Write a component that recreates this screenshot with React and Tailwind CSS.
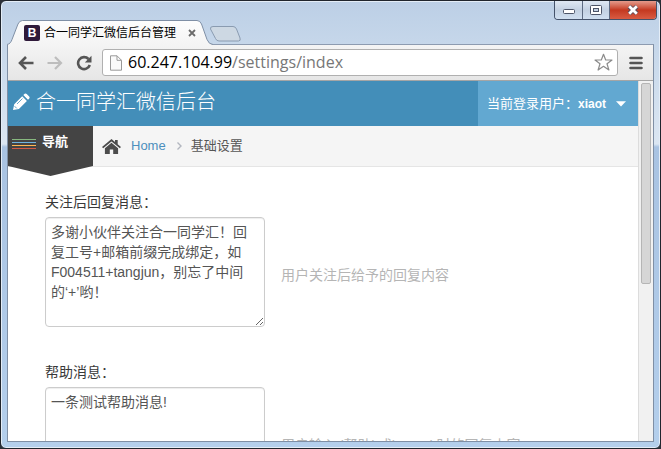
import React from 'react';

const frameText = "font-['Liberation_Sans','Noto_Sans_CJK_SC',sans-serif]";

function WindowButtons() {
  return (
    <div className="-mr-[3px] flex h-[19px] overflow-hidden rounded-b border border-t-0 border-[#44526a]">
      <button aria-label="最小化" className="flex w-[28px] items-center justify-center border-r border-[#5d6b82] bg-linear-to-b from-[#dfe8f3] via-[#c3d1e2] to-[#d0dff0]">
        <svg width="14" height="12" viewBox="0 0 14 12"><rect x="1.5" y="5.5" width="11" height="4" rx="1" fill="#fff" stroke="#4d5568" /></svg>
      </button>
      <button aria-label="最大化" className="flex w-[27px] items-center justify-center border-r border-[#5d6b82] bg-linear-to-b from-[#dfe8f3] via-[#c3d1e2] to-[#d0dff0]">
        <svg width="12" height="12" viewBox="0 0 12 12">
          <rect x="0.5" y="1.5" width="11" height="9" rx="1" fill="#fff" stroke="#4d5568" />
          <rect x="3.5" y="4.5" width="5" height="3" fill="#c3d1e2" stroke="#4d5568" />
        </svg>
      </button>
      <button aria-label="关闭" className="flex w-[46px] items-center justify-center bg-linear-to-b from-[#e39a8b] via-[#c4381f] to-[#d95b42]">
        <svg width="14" height="12" viewBox="0 0 14 12">
          <path d="M3 2.5 11 9.5M11 2.5 3 9.5" stroke="#5b4b58" strokeWidth="4.6" />
          <path d="M3.2 2.2 10.8 9.8M10.8 2.2 3.2 9.8" stroke="#fff" strokeWidth="2.8" />
        </svg>
      </button>
    </div>
  );
}

function TabStrip() {
  return (
    <div className="flex h-6 shrink-0 items-end">
      <div className="relative -mb-px flex h-[25px] w-[206px] items-center pr-[17px] pl-[17px]">
        <svg className="absolute inset-0" width="206" height="25" viewBox="0 0 206 25">
          <defs>
            <linearGradient id="tab" x1="0" y1="0" x2="0" y2="1">
              <stop offset="0" stopColor="#fdfdfd" />
              <stop offset="1" stopColor="#f4f4f4" />
            </linearGradient>
          </defs>
          <path d="M0 25V24.5C3 24 4 22 5 19.500L11 4Q12.500 .5 15.500 .5H190Q193 .5 194.500 4L200 19.500Q202 24.500 206 24.500V25Z" fill="url(#tab)" />
          <path d="M0 24.500C3 24 4 22 5 19.500L11 4Q12.500 .5 15.500 .5H190Q193 .5 194.500 4L200 19.500Q202 24.500 206 24.500" fill="none" stroke="#7f8fa5" />
        </svg>
        <span className="relative flex size-4 items-center justify-center rounded-xs bg-[#2f1a3a] text-xs font-bold text-white">B</span>
        <span className="relative ml-1 grow text-xs whitespace-nowrap text-black">合一同学汇微信后台管理</span>
        <button aria-label="关闭标签页" className="relative">
          <svg width="8" height="8" viewBox="0 0 8 8"><path d="M1 1 7 7M7 1 1 7" stroke="#6b6b6b" strokeWidth="1.800" /></svg>
        </button>
      </div>
      <button aria-label="新标签页" className="-ml-1 mb-0.5">
        <svg width="33" height="16" viewBox="0 0 33 16">
          <path d="M4 .5H24Q26.500 .5 27.500 3L31 12Q32 15 29.500 15H10Q7.500 15 6.500 12.500L1.500 3Q1 .5 4 .5Z" fill="#cdd8e3" stroke="#8a9bb0" />
        </svg>
      </button>
    </div>
  );
}

function Toolbar() {
  return (
    <div className="flex h-9 shrink-0 items-center border-b border-[#a5a5a5] bg-linear-to-b from-[#f4f4f4] to-[#e6e6e6] pr-2.5 pl-2.5">
      <button aria-label="后退" className="mr-[13px]">
        <svg width="16" height="14" viewBox="0 0 16 14" fill="none" stroke="#555" strokeWidth="2.600"><path d="M2 7H15.500M8 1 2 7 8 13" /></svg>
      </button>
      <button aria-label="前进" className="mr-[13px]">
        <svg width="16" height="14" viewBox="0 0 16 14" fill="none" stroke="#bdbdbd" strokeWidth="2.200"><path d="M.5 7H14M8 1 14 7 8 13" /></svg>
      </button>
      <button aria-label="重新加载" className="mr-2.5">
        <svg width="16" height="16" viewBox="0 0 16 16">
          <path d="M12.500 4A6 6 0 1 0 13.800 10" fill="none" stroke="#555" strokeWidth="2.600" />
          <path d="M15.500 .8V7.500H8.800Z" fill="#555" />
        </svg>
      </button>
      <div className="flex h-[27px] min-w-0 grow items-center rounded-[3px] border border-[#b0b0b0] bg-white pr-1 pl-[7px] font-['Open_Sans','Noto_Sans',sans-serif] text-base">
        <svg className="mr-1.5 shrink-0" width="12" height="16" viewBox="0 0 12 16" fill="#fafafa" stroke="#999"><path d="M.5 .8H7L11.500 5.300V15.200H.5ZM7 .8V5.300H11.500" /></svg>
        <label htmlFor="url" className="pb-0.5 text-black">60.247.104.99</label>
        <input id="url" defaultValue="/settings/index" className="min-w-0 grow pb-0.5 text-[#777] outline-none" />
        <button aria-label="收藏" className="shrink-0">
          <svg width="19" height="19" viewBox="0 0 19 19" fill="#fff" stroke="#8b8b8b" strokeWidth="1.200" strokeLinejoin="round">
            <path d="M9.500 1.300 11.700 7H18L13 10.800 14.900 17 9.500 13.300 4.100 17 6 10.800 1 7H7.300Z" />
          </svg>
        </button>
      </div>
      <button aria-label="菜单" className="ml-[11px]">
        <svg width="14" height="14" viewBox="0 0 14 14" stroke="#555" strokeWidth="2.600" strokeLinecap="round"><path d="M1.500 2H12.500M1.500 7H12.500M1.500 12H12.500" /></svg>
      </button>
    </div>
  );
}

function Header() {
  return (
    <header className="flex h-[45px] items-stretch justify-between bg-[#438eb9] text-white">
      <h1 className="flex items-center gap-[5px] pb-1 pl-1 text-[20px] leading-6 font-light">
        <svg width="19" height="18" viewBox="0 0 19 18" fill="#fff">
          <path d="M1 17 2.200 11.200 10.200 3.200 14.900 7.900 6.900 15.900ZM11.300 2.100 12.700 .8Q13.700 0 14.700 .9L17.200 3.400Q18.100 4.400 17.300 5.400L16 6.800Z" />
          <path d="M5 11 10.500 5.500M2.600 13.200 4.800 15.400" stroke="#438eb9" strokeWidth=".8" />
        </svg>
        合一同学汇微信后台
      </h1>
      <button className="flex items-center bg-[#62a8d1] pr-3 pl-[9px] text-[13px]">
        当前登录用户：<span className="text-xs font-bold">xiaot</span>
        <svg className="ml-2.5" width="10" height="6" viewBox="0 0 11 6" fill="#fff"><path d="M0 0H11L5.500 5.800Z" /></svg>
      </button>
    </header>
  );
}

function Breadcrumbs() {
  return (
    <div className="flex h-[41px] items-start border-b border-[#e5e5e5] bg-[#f5f5f5]">
      <button className="flex h-[50px] w-[85px] shrink-0 items-start gap-1.5 bg-[#444] pt-1.5 pl-1 text-[13px] font-bold text-white [clip-path:polygon(0_0,100%_0,100%_80%,50%_100%,0_80%)]">
        <svg className="mt-[7px]" width="24" height="10" viewBox="0 0 24 10">
          <path d="M0 .5H24" stroke="#87b87f" />
          <path d="M0 3.500H24" stroke="#6fb3e0" />
          <path d="M0 6.500H24" stroke="#ffb752" />
          <path d="M0 9.500H24" stroke="#d15b47" />
        </svg>
        <span className="leading-5">导航</span>
      </button>
      <nav className="flex h-10 items-center pl-[9px] text-[13px] text-[#555]">
        <svg width="19" height="15" viewBox="0 0 19 15" fill="#4c4c4c">
          <path d="M9.500 0 0 8 1.200 9.300 9.500 2.400 17.800 9.300 19 8 15.700 5.200V1H13V3Z" />
          <path d="M9.500 3.800 2.900 9.300V15H7.800V10.500H11.200V15H16.100V9.300Z" />
        </svg>
        <a href="#home" className="ml-2.5 text-[#4c8fbd]">Home</a>
        <svg className="mr-2 ml-2.5" width="7" height="8" viewBox="0 0 7 8" fill="none" stroke="#b2b6bf" strokeWidth="1.400"><path d="M1.500 .5 5 4 1.500 7.500" /></svg>
        <span>基础设置</span>
      </nav>
    </div>
  );
}

function Field({ id, label, value, hint }) {
  return (
    <div className="mb-[35px] text-sm leading-5">
      <label htmlFor={id} className="mb-[5px] block text-[#393939]">{label}</label>
      <div className="flex items-center gap-4">
        <textarea
          id={id}
          defaultValue={value}
          className="h-[110px] w-[220px] shrink-0 overflow-hidden rounded border border-[#ccc] bg-white px-[5px] py-1 text-[#555] shadow-[inset_0_1px_1px_rgba(0,0,0,0.07)]"
        />
        <span className="pt-1.5 text-[#b5b5b5]">{hint}</span>
      </div>
    </div>
  );
}

export default function App() {
  return (
    <div className="h-screen bg-[#2b3038]">
      <div className={`flex h-full flex-col overflow-hidden rounded-md border border-[#20252d] bg-[linear-gradient(#bccfe6,#c6d7ea_44px,#dbe6f2_143px,#a9c3e2_146px,#b4cfec)] px-1.5 pb-1.5 shadow-[inset_0_0_0_1px_#e4edf7] ${frameText}`}>
        <div className="flex h-[19px] shrink-0 items-start justify-end"><WindowButtons /></div>
        <TabStrip />
        <div className="flex min-h-0 grow flex-col border border-[#7f8fa5] border-t-[#8d9bb0]">
          <Toolbar />
          <div className="flex min-h-0 grow bg-white">
            <main className="min-w-0 grow overflow-hidden">
              <Header />
              <Breadcrumbs />
              <form className="px-[37px] pt-[25px]">
                <Field
                  id="welcome"
                  label="关注后回复消息："
                  value="多谢小伙伴关注合一同学汇！回复工号+邮箱前缀完成绑定，如F004511+tangjun，别忘了中间的‘+’哟！"
                  hint="用户关注后给予的回复内容"
                />
                <Field id="help" label="帮助消息：" value="一条测试帮助消息!" hint="用户输入 '帮助' 或'menu' 时的回复内容" />
              </form>
            </main>
            <div className="w-[15px] shrink-0 border-l border-[#dcdcdc] bg-[#f1f1f1] px-0.5 pt-0.5">
              <div className="h-[201px] rounded-xs border border-[#b5b5b5] bg-[#d6d6d6]" />
            </div>
          </div>
        </div>
      </div>
    </div>
  );
}
